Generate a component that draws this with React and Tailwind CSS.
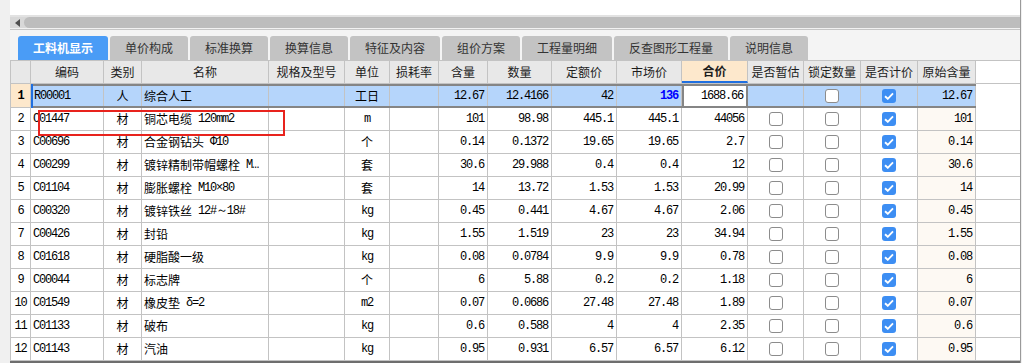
import React from 'react';

const MONO = "font-['Liberation_Mono',monospace] text-[12px] tracking-[-1.2px]";
const CJK = "font-['Noto_Sans_CJK_SC',sans-serif] text-[12px]";

const TABS = [
  { label: '工料机显示', w: 'w-[90px]', active: true },
  { label: '单价构成', w: 'w-[78px]' },
  { label: '标准换算', w: 'w-[78px]' },
  { label: '换算信息', w: 'w-[78px]' },
  { label: '特征及内容', w: 'w-[90px]' },
  { label: '组价方案', w: 'w-[78px]' },
  { label: '工程量明细', w: 'w-[90px]' },
  { label: '反查图形工程量', w: 'w-[114px]' },
  { label: '说明信息', w: 'w-[78px]' },
];

const HEAD = [
  { label: '编码', w: 'w-[73px]' },
  { label: '类别', w: 'w-[38px]' },
  { label: '名称', w: 'w-[127px]' },
  { label: '规格及型号', w: 'w-[76px]' },
  { label: '单位', w: 'w-[45px]' },
  { label: '损耗率', w: 'w-[49px]' },
  { label: '含量', w: 'w-[49px]' },
  { label: '数量', w: 'w-[64px]' },
  { label: '定额价', w: 'w-[65px]' },
  { label: '市场价', w: 'w-[65px]' },
  { label: '合价', w: 'w-[66px]', hot: true },
  { label: '是否暂估', w: 'w-[56px]' },
  { label: '锁定数量', w: 'w-[57px]' },
  { label: '是否计价', w: 'w-[57px]' },
  { label: '原始含量', w: 'w-[58px]' },
];

// code, type, name, spec-in-name, unit, qty, amount, quota, market, total, orig
const ROWS = [
  ['C01447', '材', '铜芯电缆', '120mm2', 'm', '101', '98.98', '445.1', '445.1', '44056', '101'],
  ['C00696', '材', '合金钢钻头', 'Φ10', '个', '0.14', '0.1372', '19.65', '19.65', '2.7', '0.14'],
  ['C00299', '材', '镀锌精制带帽螺栓', 'M…', '套', '30.6', '29.988', '0.4', '0.4', '12', '30.6'],
  ['C01104', '材', '膨胀螺栓', 'M10×80', '套', '14', '13.72', '1.53', '1.53', '20.99', '14'],
  ['C00320', '材', '镀锌铁丝', '12#～18#', 'kg', '0.45', '0.441', '4.67', '4.67', '2.06', '0.45'],
  ['C00426', '材', '封铅', '', 'kg', '1.55', '1.519', '23', '23', '34.94', '1.55'],
  ['C01618', '材', '硬脂酸一级', '', 'kg', '0.08', '0.0784', '9.9', '9.9', '0.78', '0.08'],
  ['C00044', '材', '标志牌', '', '个', '6', '5.88', '0.2', '0.2', '1.18', '6'],
  ['C01549', '材', '橡皮垫', 'δ=2', 'm2', '0.07', '0.0686', '27.48', '27.48', '1.89', '0.07'],
  ['C01133', '材', '破布', '', 'kg', '0.6', '0.588', '4', '4', '2.35', '0.6'],
  ['C01143', '材', '汽油', '', 'kg', '0.95', '0.931', '6.57', '6.57', '6.12', '0.95'],
];

function Check({ on }) {
  if (on) {
    return (
      <span className="flex h-[14px] w-[14px] items-center justify-center rounded-[3px] bg-[#3d8ef3]">
        <svg width="10" height="8" viewBox="0 0 10 8">
          <path d="M1 4.2 L3.8 6.8 L9 1.4" fill="none" stroke="#fff" strokeWidth="1.9" />
        </svg>
      </span>
    );
  }
  return <span className="h-[14px] w-[14px] rounded-[3px] border border-[#8c8c8c] bg-white" />;
}

const cell = 'flex h-full shrink-0 items-center border-r border-[#c3c3c3]';

function Num({ w, children, className = '' }) {
  return <div className={`${cell} ${w} justify-end pr-[3px] ${MONO} ${className}`}>{children}</div>;
}

function Unit({ w, v }) {
  const latin = /^[a-z0-9]+$/.test(v);
  return <div className={`${cell} ${w} justify-center ${latin ? MONO : CJK}`}>{v}</div>;
}

function DataRow({ n, r }) {
  return (
    <div className="flex h-[23px] border-b border-[#c3c3c3] text-black">
      <div className={`${cell} w-[21px] justify-center border-l ${MONO}`}>{n}</div>
      <div className={`${cell} w-[73px] pl-[2px] ${MONO}`}>{r[0]}</div>
      <div className={`${cell} w-[38px] justify-center ${CJK}`}>{r[1]}</div>
      <div className={`${cell} w-[127px] overflow-hidden whitespace-nowrap pl-[2px] ${CJK}`}>
        {r[2]}
        {r[3] && <span className={`ml-[6px] ${MONO}`}>{r[3]}</span>}
      </div>
      <div className={`${cell} w-[76px]`} />
      <Unit w="w-[45px]" v={r[4]} />
      <div className={`${cell} w-[49px]`} />
      <Num w="w-[49px]">{r[5]}</Num>
      <Num w="w-[64px]">{r[6]}</Num>
      <Num w="w-[65px]">{r[7]}</Num>
      <Num w="w-[65px]">{r[8]}</Num>
      <Num w="w-[66px]">{r[9]}</Num>
      <div className={`${cell} w-[56px] justify-center`}><Check /></div>
      <div className={`${cell} w-[57px] justify-center`}><Check /></div>
      <div className={`${cell} w-[57px] justify-center`}><Check on /></div>
      <Num w="w-[58px]" className="bg-[#fdf9f3]">{r[10]}</Num>
    </div>
  );
}

export default function App() {
  return (
    <div className="flex h-[363px] w-[1022px] overflow-hidden bg-[#f0f0f0]">
      <div className="w-[10px] shrink-0" />
      <div className="relative flex w-[1011px] shrink-0 flex-col border-r border-[#9a9a9a] bg-white">
        <div className="h-[15px] shrink-0 bg-white" />
        {/* horizontal scrollbar */}
        <div className="flex h-[13px] shrink-0 items-center border-t-2 border-[#e2e2e2] bg-[#d8d8d8]">
          <div className="flex w-[14px] justify-center">
            <svg width="5" height="8" viewBox="0 0 5 8"><path d="M5 0 L0 4 L5 8 Z" fill="#505050" /></svg>
          </div>
          <div className="h-[11px] flex-1 rounded-l-[6px] bg-[#bdbdbd]" />
        </div>
        <div className="h-[1px] shrink-0 bg-[#f2f2f2]" />
        <div className="h-[1px] shrink-0 bg-[#c6c6c6]" />
        {/* tabs */}
        <div className="flex h-[30px] shrink-0 items-end gap-[2px] bg-[#f4f4f4] pl-[8px]">
          {TABS.map((t) => (
            <div
              key={t.label}
              className={`flex h-[24px] ${t.w} items-center justify-center rounded-t-[3px] ${CJK} ${
                t.active ? 'bg-[#4a9cf6] font-bold text-white' : 'bg-[#c3c3c3] text-[#333]'
              }`}
            >
              {t.label}
            </div>
          ))}
        </div>
        {/* table header */}
        <div className="flex h-[24px] shrink-0 border-y border-[#c3c3c3]">
          <div className={`${cell} w-[21px] border-l bg-[#e8e8e8]`} />
          {HEAD.map((h) => (
            <div
              key={h.label}
              className={`${cell} ${h.w} justify-center ${CJK} text-[#1c1c1c] ${
                h.hot ? 'border-b-2 border-b-[#1f6fe0] bg-[#fde8cc] font-bold' : 'bg-[#e8e8e8]'
              }`}
            >
              {h.label}
            </div>
          ))}
        </div>
        {/* selected row 1 */}
        <div className="flex h-[24px] shrink-0">
          <div className={`${cell} w-[21px] justify-center border-l border-b bg-[#fde8cc] ${MONO} font-bold`}>1</div>
          <div className="w-[2px] shrink-0 bg-[#1f6fe0]" />
          <div className="flex h-full border-y-2 border-[#858585] bg-[#b5d5fb] text-black">
            <div className={`${cell} w-[71px] pl-[1px] ${MONO}`}>R00001</div>
            <div className={`${cell} w-[38px] justify-center ${CJK}`}>人</div>
            <div className={`${cell} w-[127px] pl-[2px] ${CJK}`}>综合人工</div>
            <div className={`${cell} w-[76px]`} />
            <div className={`${cell} w-[45px] justify-center ${CJK}`}>工日</div>
            <div className={`${cell} w-[49px]`} />
            <Num w="w-[49px]">12.67</Num>
            <Num w="w-[64px]">12.4166</Num>
            <Num w="w-[65px]">42</Num>
            <Num w="w-[65px]" className="font-bold text-[#0000ff]">136</Num>
            <div className={`flex h-full w-[66px] shrink-0 items-center justify-end border-x-2 border-[#858585] bg-white pr-[3px] ${MONO}`}>1688.66</div>
            <div className={`${cell} w-[56px]`} />
            <div className={`${cell} w-[57px] justify-center`}><Check /></div>
            <div className={`${cell} w-[57px] justify-center`}><Check on /></div>
            <Num w="w-[58px]">12.67</Num>
          </div>
        </div>
        {ROWS.map((r, i) => (
          <DataRow key={r[0]} n={i + 2} r={r} />
        ))}
        <div className="h-[2px] shrink-0 bg-[#6e6e6e]" />
        {/* red annotation box */}
        <div className="absolute left-[28px] top-[110px] h-[26px] w-[247px] border-2 border-[#e8231d]" />
      </div>
    </div>
  );
}
